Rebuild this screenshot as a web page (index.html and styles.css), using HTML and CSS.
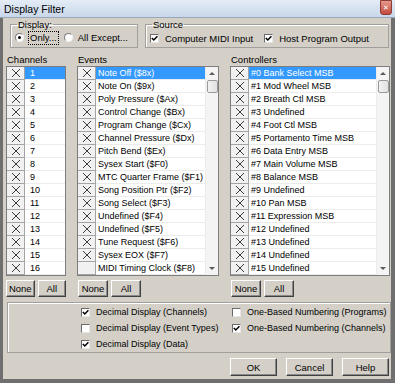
FILE: index.html
```html
<!DOCTYPE html>
<html lang="en">

<head>
    <meta charset="UTF-8">
    <title>Display Filter</title>
    <link rel="stylesheet" href="styles.css">
</head>

<body>
    <div class="window">
        <div class="titlebar">
            <span class="title">Display Filter</span>
            <span class="close">&#x2715;</span>
        </div>

        <div class="client">
            <!-- Display / Source -->
            <div class="top">
                <fieldset class="group display">
                    <legend>Display:</legend>
                    <label class="radio on"><i></i><span class="focus">Only...</span></label>
                    <label class="radio"><i></i><span>All Except...</span></label>
                </fieldset>
                <fieldset class="group source">
                    <legend>Source</legend>
                    <label class="check on"><i><svg viewBox="0 0 7 7"><path d="M0.8 3 L2.8 5 L6.4 1.2" /></svg></i>Computer MIDI Input</label>
                    <label class="check on"><i><svg viewBox="0 0 7 7"><path d="M0.8 3 L2.8 5 L6.4 1.2" /></svg></i>Host Program Output</label>
                </fieldset>
            </div>

            <!-- Lists -->
            <div class="lists">
                <div class="col channels">
                    <div class="caption">Channels</div>
                    <div class="list">
                        <div class="rows">
                            <div class="row sel"><span class="chk on"></span><span class="lbl">1</span></div>
                            <div class="row"><span class="chk on"></span><span class="lbl">2</span></div>
                            <div class="row"><span class="chk on"></span><span class="lbl">3</span></div>
                            <div class="row"><span class="chk on"></span><span class="lbl">4</span></div>
                            <div class="row"><span class="chk on"></span><span class="lbl">5</span></div>
                            <div class="row"><span class="chk on"></span><span class="lbl">6</span></div>
                            <div class="row"><span class="chk on"></span><span class="lbl">7</span></div>
                            <div class="row"><span class="chk on"></span><span class="lbl">8</span></div>
                            <div class="row"><span class="chk on"></span><span class="lbl">9</span></div>
                            <div class="row"><span class="chk on"></span><span class="lbl">10</span></div>
                            <div class="row"><span class="chk on"></span><span class="lbl">11</span></div>
                            <div class="row"><span class="chk on"></span><span class="lbl">12</span></div>
                            <div class="row"><span class="chk on"></span><span class="lbl">13</span></div>
                            <div class="row"><span class="chk on"></span><span class="lbl">14</span></div>
                            <div class="row"><span class="chk on"></span><span class="lbl">15</span></div>
                            <div class="row"><span class="chk on"></span><span class="lbl">16</span></div>
                        </div>
                    </div>
                    <div class="btns">
                        <button class="btn">None</button>
                        <button class="btn">All</button>
                    </div>
                </div>

                <div class="col events">
                    <div class="caption">Events</div>
                    <div class="list">
                        <div class="rows">
                            <div class="row sel"><span class="chk on"></span><span class="lbl">Note Off ($8x)</span></div>
                            <div class="row"><span class="chk on"></span><span class="lbl">Note On ($9x)</span></div>
                            <div class="row"><span class="chk on"></span><span class="lbl">Poly Pressure ($Ax)</span></div>
                            <div class="row"><span class="chk on"></span><span class="lbl">Control Change ($Bx)</span></div>
                            <div class="row"><span class="chk on"></span><span class="lbl">Program Change ($Cx)</span></div>
                            <div class="row"><span class="chk on"></span><span class="lbl">Channel Pressure ($Dx)</span></div>
                            <div class="row"><span class="chk on"></span><span class="lbl">Pitch Bend ($Ex)</span></div>
                            <div class="row"><span class="chk on"></span><span class="lbl">Sysex Start ($F0)</span></div>
                            <div class="row"><span class="chk on"></span><span class="lbl">MTC Quarter Frame ($F1)</span></div>
                            <div class="row"><span class="chk on"></span><span class="lbl">Song Position Ptr ($F2)</span></div>
                            <div class="row"><span class="chk on"></span><span class="lbl">Song Select ($F3)</span></div>
                            <div class="row"><span class="chk on"></span><span class="lbl">Undefined ($F4)</span></div>
                            <div class="row"><span class="chk on"></span><span class="lbl">Undefined ($F5)</span></div>
                            <div class="row"><span class="chk on"></span><span class="lbl">Tune Request ($F6)</span></div>
                            <div class="row"><span class="chk on"></span><span class="lbl">Sysex EOX ($F7)</span></div>
                            <div class="row"><span class="chk"></span><span class="lbl">MIDI Timing Clock ($F8)</span></div>
                        </div>
                        <div class="sb">
                            <span class="arrow up"></span>
                            <span class="thumb"></span>
                            <span class="track"></span>
                            <span class="arrow down"></span>
                        </div>
                    </div>
                    <div class="btns">
                        <button class="btn">None</button>
                        <button class="btn">All</button>
                    </div>
                </div>

                <div class="col controllers">
                    <div class="caption">Controllers</div>
                    <div class="list">
                        <div class="rows">
                            <div class="row sel"><span class="chk on"></span><span class="lbl">#0 Bank Select MSB</span></div>
                            <div class="row"><span class="chk on"></span><span class="lbl">#1 Mod Wheel MSB</span></div>
                            <div class="row"><span class="chk on"></span><span class="lbl">#2 Breath Ctl MSB</span></div>
                            <div class="row"><span class="chk on"></span><span class="lbl">#3 Undefined</span></div>
                            <div class="row"><span class="chk on"></span><span class="lbl">#4 Foot Ctl MSB</span></div>
                            <div class="row"><span class="chk on"></span><span class="lbl">#5 Portamento Time MSB</span></div>
                            <div class="row"><span class="chk on"></span><span class="lbl">#6 Data Entry MSB</span></div>
                            <div class="row"><span class="chk on"></span><span class="lbl">#7 Main Volume MSB</span></div>
                            <div class="row"><span class="chk on"></span><span class="lbl">#8 Balance MSB</span></div>
                            <div class="row"><span class="chk on"></span><span class="lbl">#9 Undefined</span></div>
                            <div class="row"><span class="chk on"></span><span class="lbl">#10 Pan MSB</span></div>
                            <div class="row"><span class="chk on"></span><span class="lbl">#11 Expression MSB</span></div>
                            <div class="row"><span class="chk on"></span><span class="lbl">#12 Undefined</span></div>
                            <div class="row"><span class="chk on"></span><span class="lbl">#13 Undefined</span></div>
                            <div class="row"><span class="chk on"></span><span class="lbl">#14 Undefined</span></div>
                            <div class="row"><span class="chk on"></span><span class="lbl">#15 Undefined</span></div>
                        </div>
                        <div class="sb">
                            <span class="arrow up"></span>
                            <span class="thumb"></span>
                            <span class="track"></span>
                            <span class="arrow down"></span>
                        </div>
                    </div>
                    <div class="btns">
                        <button class="btn">None</button>
                        <button class="btn">All</button>
                    </div>
                </div>
            </div>

            <!-- Options -->
            <div class="options">
                <label class="check on"><i><svg viewBox="0 0 7 7"><path d="M0.8 3 L2.8 5 L6.4 1.2" /></svg></i>Decimal Display (Channels)</label>
                <label class="check"><i></i>One-Based Numbering (Programs)</label>
                <label class="check"><i></i>Decimal Display (Event Types)</label>
                <label class="check on"><i><svg viewBox="0 0 7 7"><path d="M0.8 3 L2.8 5 L6.4 1.2" /></svg></i>One-Based Numbering (Channels)</label>
                <label class="check on"><i><svg viewBox="0 0 7 7"><path d="M0.8 3 L2.8 5 L6.4 1.2" /></svg></i>Decimal Display (Data)</label>
            </div>

            <div class="actions">
                <button class="btn wide">OK</button>
                <button class="btn wide">Cancel</button>
                <button class="btn wide">Help</button>
            </div>
        </div>
    </div>
</body>

</html>
```

FILE: styles.css
```css
* {
    box-sizing: border-box;
}

body {
    margin: 0;
    font-family: "Liberation Sans", Arial, sans-serif;
    font-size: 9px;
    color: #000;
}

.window {
    width: 395px;
    height: 383px;
    display: flex;
    flex-direction: column;
    background: #6f6f6f;
}

.titlebar {
    height: 18px;
    display: flex;
    align-items: center;
    justify-content: space-between;
    padding: 0 3px 0 4px;
    background: linear-gradient(#e4ecf6, #c8d7ea);
    border-bottom: 1px solid #9aa7b8;
}

.title {
    font-size: 10.5px;
}

.close {
    width: 12px;
    height: 15px;
    margin-top: -2px;
    display: flex;
    align-items: center;
    justify-content: center;
    color: #fff;
    font-size: 7px;
    font-family: "DejaVu Sans", sans-serif;
    background: linear-gradient(#e5998e, #c4493b);
    border: 1px solid #8d3c33;
    border-radius: 0 0 3px 3px;
}

.client {
    flex: 1;
    margin: 0 4px 4px 3px;
    background: #d4d0c8;
}

/* group boxes */
.top {
    display: flex;
    gap: 7px;
    margin: 1px 0 0 7px;
}

.group {
    margin: 0;
    height: 29px;
    border: 1px solid #a19f9b;
    box-shadow: inset 1px 1px 0 #fff;
    display: flex;
    align-items: center;
}

.group legend {
    padding: 0 1px;
    margin-left: 2px;
    line-height: 11px;
    font-size: 9.5px;
}

.display {
    width: 128px;
    padding: 0 0 2px 4px;
}

.source {
    width: 244px;
    padding: 0 0 1px 4px;
}

.radio,
.check {
    display: inline-flex;
    align-items: center;
    line-height: 13px;
    white-space: nowrap;
}

.top .radio,
.top .check {
    font-size: 9.5px;
}

.radio i {
    width: 9px;
    height: 9px;
    border-radius: 50%;
    background: #fff;
    border: 1px solid;
    border-color: #7c7c7c #f2f2f2 #f2f2f2 #7c7c7c;
    margin-right: 5px;
    display: flex;
    align-items: center;
    justify-content: center;
}

.radio.on i::after {
    content: "";
    width: 3px;
    height: 3px;
    border-radius: 50%;
    background: #000;
}

.radio .focus {
    outline: 1px dotted #000;
    padding: 0 1px;
    line-height: 12px;
}

.display .radio+.radio {
    margin-left: 6px;
}

.check i {
    width: 9px;
    height: 9px;
    background: #fff;
    border: 1px solid;
    border-color: #6a6a6a #e6e6e6 #e6e6e6 #6a6a6a;
    margin-right: 6px;
    display: flex;
}

.check svg {
    width: 7px;
    height: 7px;
}

.check svg path {
    fill: none;
    stroke: #000;
    stroke-width: 1.5;
}

.source .check+.check {
    margin-left: 11px;
}

/* lists */
.lists {
    display: flex;
    margin: 6px 0 0 3px;
}

.col {
    display: flex;
    flex-direction: column;
}

.channels {
    width: 60px;
}

.events {
    width: 142px;
    margin-left: 11px;
}

.controllers {
    width: 160px;
    margin-left: 11px;
}

.caption {
    line-height: 12px;
    padding-left: 1px;
    font-size: 9.5px;
}

.list {
    height: 210px;
    display: flex;
    background: #fff;
    border: 1px solid #7d7d7d;
}

.rows {
    flex: 1;
    min-width: 0;
}

.row {
    display: flex;
    height: 13px;
}

.chk {
    width: 18px;
    flex: none;
    background: #f1f1f1;
    border-right: 1px solid #a4a4a4;
    border-bottom: 1px solid #a4a4a4;
    display: flex;
    align-items: center;
    justify-content: center;
}

.chk.on::before {
    content: "";
    width: 8px;
    height: 8px;
    background:
        linear-gradient(45deg, transparent 44%, #3c3c3c 44%, #3c3c3c 56%, transparent 56%),
        linear-gradient(-45deg, transparent 44%, #3c3c3c 44%, #3c3c3c 56%, transparent 56%);
}

.lbl {
    flex: 1;
    padding-left: 2px;
    line-height: 12px;
    white-space: nowrap;
    overflow: hidden;
    border-bottom: 1px solid #ececec;
}

.channels .lbl {
    padding-left: 5px;
}

.row.sel .lbl {
    background: #3399ff;
    color: #fff;
}

.sb {
    width: 13px;
    flex: none;
    display: flex;
    flex-direction: column;
    align-items: center;
    background: #f4f4f4;
    border-left: 1px solid #ececec;
}

.arrow {
    height: 13px;
    display: flex;
    align-items: center;
}

.arrow::before {
    content: "";
    border-left: 3px solid transparent;
    border-right: 3px solid transparent;
}

.arrow.up::before {
    border-bottom: 3px solid #5a5a5a;
}

.arrow.down::before {
    border-top: 3px solid #5a5a5a;
}

.thumb {
    width: 11px;
    height: 13px;
    background: linear-gradient(90deg, #f2f2f2, #e0e0e0);
    border: 1px solid #9b9b9b;
    border-radius: 2px;
}

.track {
    flex: 1;
}

/* buttons */
.btns {
    display: flex;
    gap: 3px;
    margin-top: 4px;
}

.btn {
    width: 30px;
    height: 17px;
    padding: 0;
    font: inherit;
    font-size: 9.5px;
    color: #000;
    background: #d4d0c8;
    border: 1px solid;
    border-color: #fff #404040 #404040 #fff;
    box-shadow: inset -1px -1px 0 #8a8a8a;
}

.events .btns,
.controllers .btns {
    padding-left: 1px;
}

/* options */
.options {
    margin: 5px 0 0 4px;
    width: 384px;
    height: 51px;
    border: 1px solid #a19f9b;
    box-shadow: inset 1px 1px 0 #fff;
    display: grid;
    grid-template-columns: 151px 1fr;
    grid-auto-rows: 16px;
    align-items: center;
    padding: 1px 0 0 73px;
}

.actions {
    display: flex;
    justify-content: flex-end;
    gap: 9px;
    margin-top: 5px;
    padding-right: 2px;
}

.btn.wide {
    width: 47px;
    height: 18px;
}
```
